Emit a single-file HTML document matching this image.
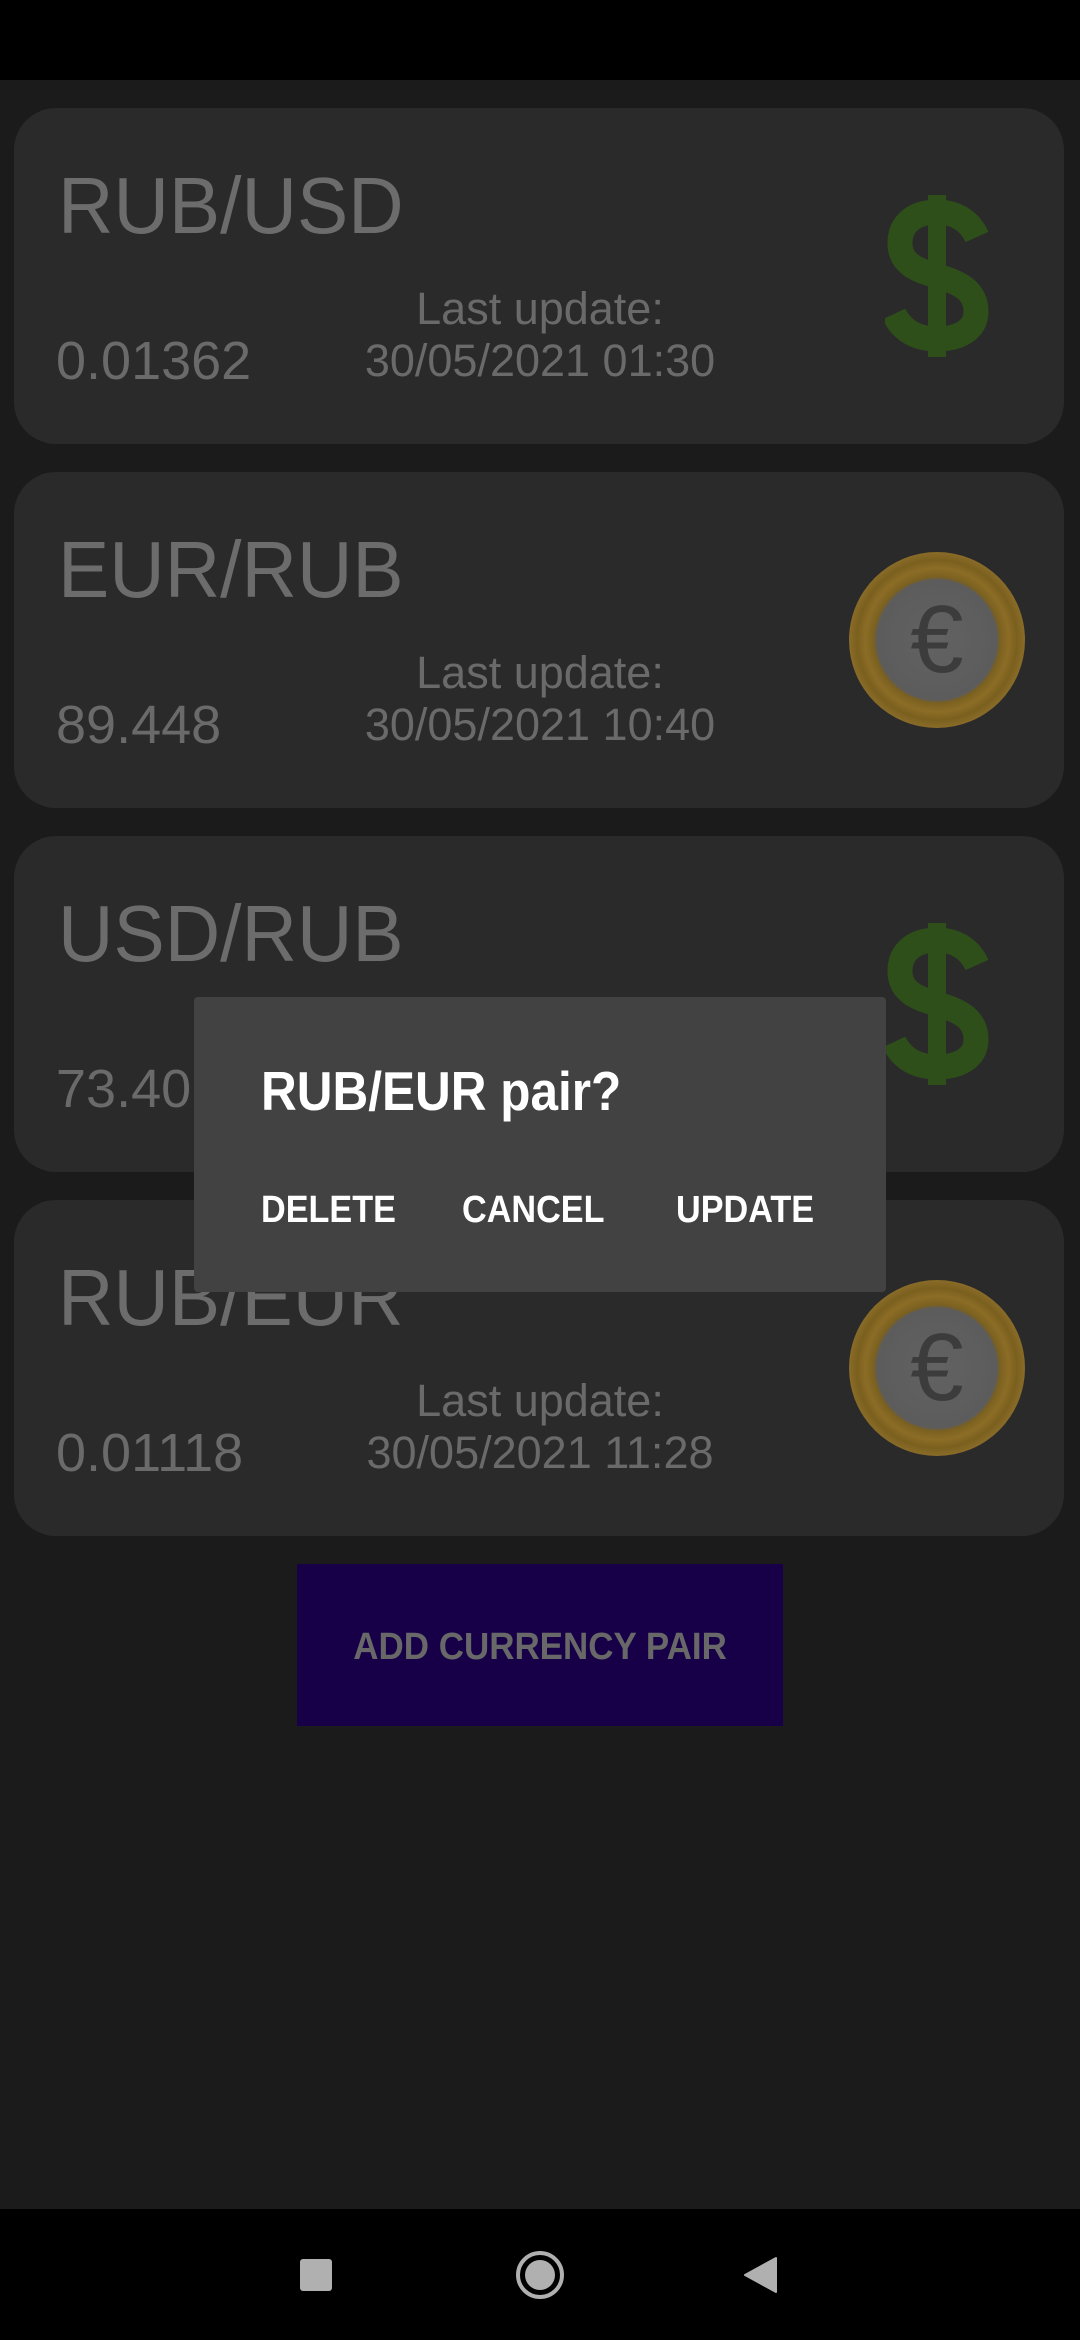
<!DOCTYPE html>
<html><head><meta charset="utf-8"><style>
*{margin:0;padding:0;box-sizing:border-box}
body{width:1080px;height:2340px;background:#1b1b1b;position:relative;overflow:hidden;font-family:"Liberation Sans",sans-serif}
.abs{position:absolute}
.status{left:0;top:0;width:1080px;height:80px;background:#000}
.card{left:14px;width:1050px;height:336px;background:#2a2a2a;border-radius:42px}
.t{position:absolute;left:44px;top:58px;font-size:80px;color:#6c6c6c;line-height:1;white-space:nowrap;transform:scaleX(0.96);transform-origin:left}
.v{position:absolute;left:42px;top:226px;font-size:54px;color:#6a6a6a;line-height:1;white-space:nowrap}
.l1{position:absolute;left:226px;width:600px;text-align:center;top:178px;font-size:45px;color:#6a6a6a;line-height:1}
.l2{position:absolute;left:226px;width:600px;text-align:center;top:230px;font-size:45px;color:#6a6a6a;line-height:1}
.dollar{position:absolute;left:871px;top:87px}
.coin{position:absolute;left:835px;top:80px;width:176px;height:176px;border-radius:50%;background:radial-gradient(circle,#626262 0,#5c5c5c 60px,#7a6020 63px,#8c6d26 72px,#7a5f1e 80px,#8a6c28 88px)}
.coin span{position:absolute;left:0;width:176px;top:40px;text-align:center;font-size:96px;color:#3c3c3c;line-height:1}
.dlg{left:194px;top:997px;width:692px;height:295px;background:#424242;border-radius:4px}
.btn{font-size:38px;color:#fff;font-weight:bold;line-height:1;top:1191px;transform:scaleX(0.9);transform-origin:left}
.nav{left:0;top:2209px;width:1080px;height:131px;background:#000}
</style></head><body>
<div class="abs status"></div>

<div class="abs card" style="top:108px">
 <div class="t">RUB/USD</div><div class="v">0.01362</div>
 <div class="l1">Last update:</div><div class="l2">30/05/2021 01:30</div>
 <svg class="dollar" width="105" height="162" viewBox="0 0 105 162"><rect x="43" y="0" width="18" height="162" fill="#2e4f1a"/><path d="M92 42 C84 24 68 17 52 17 C29 17 15 29 15 48 C15 70 35 76 52 81 C72 87 91 94 91 117 C91 134 75 144 52 144 C32 144 17 136 9 119" fill="none" stroke="#2e4f1a" stroke-width="25"/></svg>
</div>
<div class="abs card" style="top:472px">
 <div class="t">EUR/RUB</div><div class="v">89.448</div>
 <div class="l1">Last update:</div><div class="l2">30/05/2021 10:40</div>
 <div class="coin"><span>€</span></div>
</div>
<div class="abs card" style="top:836px">
 <div class="t">USD/RUB</div><div class="v">73.40</div>
 <svg class="dollar" width="105" height="162" viewBox="0 0 105 162"><rect x="43" y="0" width="18" height="162" fill="#2e4f1a"/><path d="M92 42 C84 24 68 17 52 17 C29 17 15 29 15 48 C15 70 35 76 52 81 C72 87 91 94 91 117 C91 134 75 144 52 144 C32 144 17 136 9 119" fill="none" stroke="#2e4f1a" stroke-width="25"/></svg>
</div>
<div class="abs card" style="top:1200px">
 <div class="t">RUB/EUR</div><div class="v">0.01118</div>
 <div class="l1">Last update:</div><div class="l2">30/05/2021 11:28</div>
 <div class="coin"><span>€</span></div>
</div>

<div class="abs" style="left:297px;top:1564px;width:486px;height:162px;background:#170048"></div>
<div class="abs" style="left:297px;top:1628px;width:486px;text-align:center;font-size:38px;color:#686868;line-height:1;font-weight:bold"><span style="display:inline-block;transform:scaleX(0.92)">ADD CURRENCY PAIR</span></div>

<div class="abs dlg"></div>
<div class="abs" style="left:261px;top:1064px;font-size:55px;color:#fff;line-height:1;font-weight:bold;transform:scaleX(0.9);transform-origin:left;white-space:nowrap">RUB/EUR pair?</div>
<div class="abs btn" style="left:261px">DELETE</div>
<div class="abs btn" style="left:462px">CANCEL</div>
<div class="abs btn" style="left:676px">UPDATE</div>

<div class="abs nav"></div>
<div class="abs" style="left:300px;top:2259px;width:32px;height:32px;background:#b0b0b0;border-radius:3px"></div>
<div class="abs" style="left:516px;top:2251px;width:48px;height:48px;border:4px solid #b0b0b0;border-radius:50%"></div>
<div class="abs" style="left:525px;top:2260px;width:30px;height:30px;background:#b0b0b0;border-radius:50%"></div>
<svg class="abs" style="left:740px;top:2255px" width="40" height="40"><path d="M36 3 L36 37 L5 20 Z" fill="#b0b0b0" stroke="#b0b0b0" stroke-width="2" stroke-linejoin="round"/></svg>
</body></html>
